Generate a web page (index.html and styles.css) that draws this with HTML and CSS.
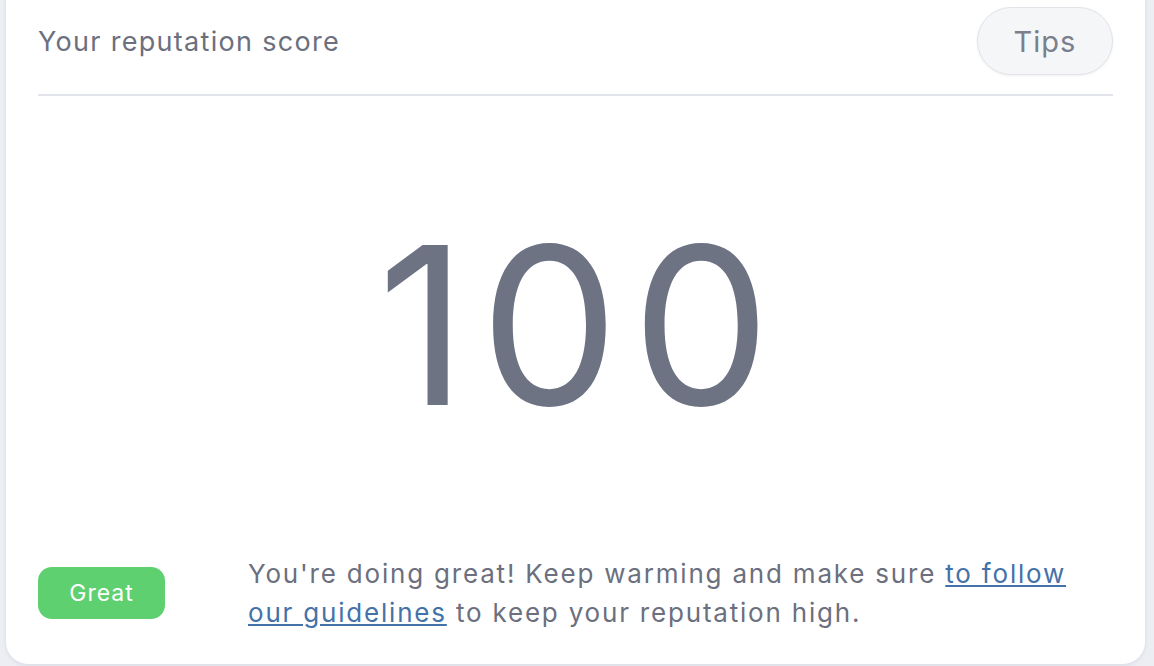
FILE: index.html
```html
<!DOCTYPE html>
<html lang="en">
<head>
    <meta charset="UTF-8">
    <meta name="viewport" content="width=device-width, initial-scale=1.0">
    <title>Reputation score</title>
    <link rel="stylesheet" href="styles.css">
</head>
<body>
    <div class="card">
        <div class="card-header">
            <h2 class="card-title">Your reputation score</h2>
            <button class="tips-btn">Tips</button>
        </div>

        <div class="score">100</div>

        <div class="card-footer">
            <span class="badge">Great</span>
            <p class="message">You're doing great! Keep warming and make sure <a href="#">to follow our guidelines</a> to keep your reputation high.</p>
        </div>
    </div>
</body>
</html>
```

FILE: styles.css
```css
html, body {
    height: 100%;
}
body {
    margin: 0;
    padding: 0 9px 2px 6px;
    box-sizing: border-box;
    background-color: #eceef3;
    font-family: Inter, "Noto Sans", sans-serif;
    color: #6b6f7e;
    overflow: hidden;
}
.card {
    margin-top: -20px;
    height: 684px;
    box-sizing: border-box;
    background-color: #fff;
    border-radius: 22px;
    box-shadow: 0 1px 4px rgba(60, 70, 100, 0.12);
    padding: 27px 32px 32px;
    display: flex;
    flex-direction: column;
}
.card-header {
    display: flex;
    align-items: center;
    justify-content: space-between;
    padding-bottom: 19px;
    border-bottom: 2px solid #e2e4ec;
}
.card-title {
    margin: 0;
    font-size: 27px;
    font-weight: 400;
    letter-spacing: 1.3px;
    color: #6b6f7e;
}
.tips-btn {
    height: 68px;
    width: 136px;
    border-radius: 34px;
    border: 1px solid #e2e3e8;
    background-color: #f5f6f8;
    box-shadow: 0 1px 3px rgba(0, 0, 0, 0.06);
    font-family: inherit;
    font-size: 29px;
    letter-spacing: 1px;
    color: #7b7f8c;
    cursor: pointer;
}
.score {
    flex: 1;
    display: flex;
    align-items: center;
    justify-content: center;
    padding-left: 10px;
    font-size: 220px;
    font-weight: 400;
    line-height: 1;
    color: #6e7384;
    letter-spacing: 13px;
}
.card-footer {
    display: flex;
    align-items: center;
    gap: 83px;
}
.badge {
    flex: none;
    width: 127px;
    height: 52px;
    border-radius: 14px;
    background-color: #5fd06f;
    color: #fff;
    font-size: 23px;
    letter-spacing: 1px;
    display: flex;
    align-items: center;
    justify-content: center;
}
.message {
    flex: 1;
    margin: 0;
    font-size: 26px;
    line-height: 39px;
    letter-spacing: 1.8px;
    color: #6b6f7e;
}
.message a {
    color: #4472a8;
}
```
